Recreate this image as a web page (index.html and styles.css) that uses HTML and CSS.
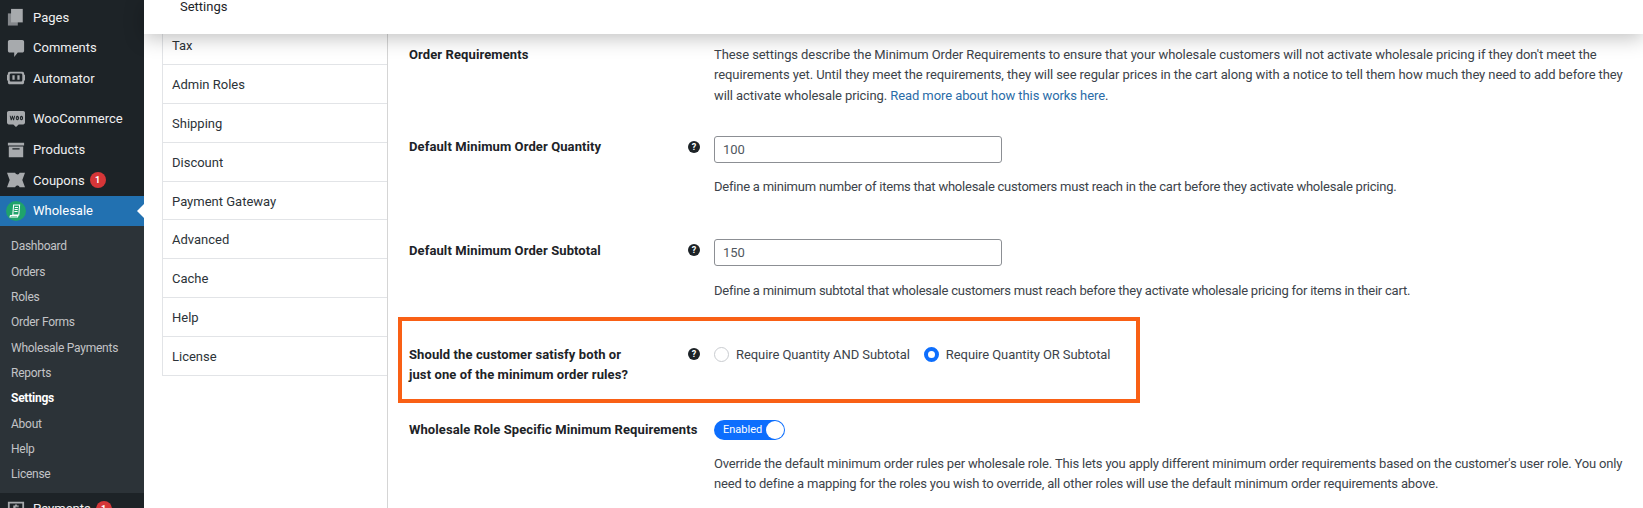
FILE: index.html
```html
<!DOCTYPE html>
<html lang="en">
<head>
<meta charset="utf-8">
<title>Settings</title>
<link rel="stylesheet" href="styles.css">
</head>
<body>
<div class="page">
  <nav class="sidebar">
    <ul class="menu">
      <li class="item"><svg class="ico" viewBox="0 0 20 20"><path opacity=".75" d="M1 6h11v13.500H1z"/><path d="M4.500 1H17.500v15H4.500z"/></svg>Pages</li>
      <li class="item"><svg class="ico" viewBox="0 0 20 20"><path d="M3 1h14c1.100 0 2 .9 2 2v10c0 1.100-.9 2-2 2h-5l-4 5v-5H3c-1.100 0-2-.9-2-2V3c0-1.100.9-2 2-2z"/></svg>Comments</li>
      <li class="item"><svg class="ico" viewBox="0 0 20 16"><path fill-rule="evenodd" d="M3 1h14c1.200 0 2 .8 2 2v1c.6 0 1 .4 1 1v5c0 .6-.4 1-1 1v2c0 1.200-.8 2-2 2H3c-1.200 0-2-.8-2-2v-2c-.6 0-1-.4-1-1V5c0-.6.4-1 1-1V3c0-1.200.8-2 2-2zm1.500 2C3.700 3 3 3.700 3 4.500v6C3 11.300 3.700 12 4.500 12h11c.8 0 1.500-.7 1.500-1.500v-6C17 3.700 16.300 3 15.500 3h-11zM6 5h2.500v5H6V5zm5.500 0H14v5h-2.500V5z"/></svg>Automator</li>
      <li class="item sep"><svg class="ico" viewBox="0 0 20 20"><path fill-rule="evenodd" d="M2 1h16c1.100 0 2 .9 2 2v11c0 1.100-.9 2-2 2h-5l-3 3-3-3H2c-1.100 0-2-.9-2-2V3c0-1.100.9-2 2-2zm1 5.500l1.200 5h1L6 8.500l.8 3h1l1.200-5H8l-.7 3-.8-3h-1l-.8 3-.7-3H3zm8.500 0a1.800 2.500 0 1 0 .1 0zm0 1.500a.6 1 0 1 1-.1 0zm4.500-1.500a1.800 2.500 0 1 0 .1 0zm0 1.500a.6 1 0 1 1-.1 0z"/></svg>WooCommerce</li>
      <li class="item"><svg class="ico" viewBox="0 0 20 16"><path fill-rule="evenodd" d="M1 0h18v3H1V0zm1 4h16v12H2V4zm4 2v1.500h8V6H6z"/></svg>Products</li>
      <li class="item"><svg class="ico" viewBox="0 0 20 16"><path d="M0 0h9c.6 1.200 1.500 1.800 3 1.800 1 0 1.500-.8 2-1.800h6l-3 8 3 8h-6c-.5-1-1-1.800-2-1.800-1.500 0-2.400.6-3 1.800H0l3-8-3-8z"/></svg>Coupons<span class="badge">1</span></li>
      <li class="item current"><span class="logo"><svg viewBox="0 0 20 20"><path fill="none" stroke="#fff" stroke-width="1.300" d="M7 2.500h7.500l-1 12.500H6zM8.500 5.500h4M8.200 8h4M8 10.500h4M3 15.500h9.500l-.5 2H2.500z"/></svg></span>Wholesale</li>
    </ul>
    <ul class="submenu">
      <li>Dashboard</li>
      <li>Orders</li>
      <li>Roles</li>
      <li>Order Forms</li>
      <li>Wholesale Payments</li>
      <li>Reports</li>
      <li class="on">Settings</li>
      <li>About</li>
      <li>Help</li>
      <li>License</li>
    </ul>
    <ul class="menu">
      <li class="item"><svg class="ico" viewBox="0 0 20 20"><path fill-rule="evenodd" d="M1 2h18v14H1V2zm2 2v10h14V4H3zm6 1h2v1h2v1.500h-3.500v1H13V13h-2v1H9v-1H7v-1.500h3.500v-1H7V6h2V5z"/></svg>Payments<span class="badge">1</span></li>
    </ul>
  </nav>

  <div class="main">
    <header class="topbar">Settings</header>
    <div class="body">
      <ul class="tabs">
        <li>Tax</li>
        <li>Admin Roles</li>
        <li>Shipping</li>
        <li>Discount</li>
        <li>Payment Gateway</li>
        <li>Advanced</li>
        <li>Cache</li>
        <li>Help</li>
        <li>License</li>
      </ul>
      <section class="settings">
        <div class="row r-intro">
          <h3 class="label">Order Requirements</h3>
          <span></span>
          <p class="desc intro">These settings describe the Minimum Order Requirements to ensure that your wholesale customers will not activate wholesale pricing if they don't meet the requirements yet. Until they meet the requirements, they will see regular prices in the cart along with a notice to tell them how much they need to add before they will activate wholesale pricing. <a href="#">Read more about how this works here</a>.</p>
        </div>
        <div class="row r-qty">
          <h3 class="label">Default Minimum Order Quantity</h3>
          <span class="help">?</span>
          <div class="control">
            <input class="field" type="text" value="100">
            <p class="desc note">Define a minimum number of items that wholesale customers must reach in the cart before they activate wholesale pricing.</p>
          </div>
        </div>
        <div class="row r-sub">
          <h3 class="label">Default Minimum Order Subtotal</h3>
          <span class="help">?</span>
          <div class="control">
            <input class="field" type="text" value="150">
            <p class="desc note">Define a minimum subtotal that wholesale customers must reach before they activate wholesale pricing for items in their cart.</p>
          </div>
        </div>
        <div class="row highlight">
          <h3 class="label">Should the customer satisfy both or<br>just one of the minimum order rules?</h3>
          <span class="help">?</span>
          <div class="radios">
            <span class="radio"><i class="dot"></i>Require Quantity AND Subtotal</span>
            <span class="radio"><i class="dot checked"></i>Require Quantity OR Subtotal</span>
          </div>
        </div>
        <div class="row r-role">
          <h3 class="label nowrap">Wholesale Role Specific Minimum Requirements</h3>
          <span></span>
          <div class="control">
            <span class="toggle">Enabled<i class="knob"></i></span>
            <p class="desc note2">Override the default minimum order rules per wholesale role. This lets you apply different minimum order requirements based on the customer's user role. You only need to define a mapping for the roles you wish to override, all other roles will use the default minimum order requirements above.</p>
          </div>
        </div>
      </section>
    </div>
  </div>
</div>
</body>
</html>
```

FILE: styles.css
```css
* { box-sizing: border-box; }
html, body { margin: 0; height: 100%; overflow: hidden; background: #fff; }
body { font-family: Roboto, "Open Sans", sans-serif; font-size: 13px; color: #2c3338; }
ul { list-style: none; margin: 0; padding: 0; }
h3, p { margin: 0; }
.page { display: flex; width: 1643px; height: 508px; overflow: hidden; }

.sidebar { width: 144px; flex: none; background: #1d2327; padding-top: 1.700px; color: #f0f0f1; }
.item { position: relative; display: flex; align-items: center; height: 30.67px; padding-left: 7px; }
.item.sep { margin-top: 10px; }
.ico { width: 18px; height: 18px; margin-right: 8px; fill: #a7aaad; flex: none; }
.badge { display: inline-flex; align-items: center; justify-content: center; width: 16px; height: 16px; margin-left: 5px; border-radius: 50%; background: #d63638; color: #fff; font-size: 9px; font-weight: 700; }
.current { background: #2271b1; color: #fff; padding-left: 6px; }
.current::after { content: ""; position: absolute; right: 0; top: 8px; border: 7px solid transparent; border-right-color: #fff; border-left-width: 0; }
.logo { display: flex; align-items: center; justify-content: center; width: 20px; height: 20px; margin-right: 7px; border-radius: 50%; background: #1fa36b; }
.logo svg { width: 16px; height: 16px; }
.submenu { background: #2c3338; height: 267px; padding: 8px 0 5px; font-size: 12px; letter-spacing: -.25px; color: #c3c4c7; }
.submenu li { height: 25.33px; line-height: 25px; padding-left: 11px; }
.submenu .on { color: #fff; font-weight: 700; }

.main { flex: 1; min-width: 0; display: flex; flex-direction: column; }
.topbar { position: relative; z-index: 2; height: 34px; flex: none; padding: 0 0 0 36px; line-height: 14px; background: #fff; color: #1d2327; box-shadow: 0 4px 20px rgba(0, 0, 0, .25); }
.body { display: flex; flex: 1; min-height: 0; }
.tabs { width: 225px; margin: -9px 0 0 18px; flex: none; align-self: flex-start; border: 1px solid #e2e4e7; border-right: 0; color: #2c3338; }
.tabs li { height: 38.9px; line-height: 39px; padding-left: 9px; border-bottom: 1px solid #e2e4e7; }
.tabs li:last-child { border-bottom: 0; height: 38px; }

.settings { flex: 1; min-width: 0; border-left: 1px solid #d5d5d5; padding-left: 21px; color: #3c434a; }
.row { display: grid; grid-template-columns: 279px 26px 1fr; }
.label { font-size: 13px; font-weight: 700; line-height: 20px; letter-spacing: .1px; color: #1d2327; }
.nowrap { white-space: nowrap; }
.desc { font-size: 13px; line-height: 20.3px; max-width: 925px; }
.desc a { color: #2a6ca8; text-decoration: none; }
.intro { letter-spacing: -.08px; }
.r-intro { padding-top: 11px; }
.r-qty { margin-top: 30px; }
.r-sub { margin-top: 41.500px; }
.r-qty .label { margin-top: 1px; }
.r-sub .label { margin-top: 2px; }
.help { display: inline-flex; align-items: center; justify-content: center; width: 12px; height: 12px; margin-top: 5px; border-radius: 50%; background: #1d2327; color: #fff; font-size: 9px; font-weight: 700; }
.field { display: block; width: 288px; height: 27px; padding: 0 8px; border: 1px solid #8c8f94; border-radius: 3px; font: 13px Roboto, "Open Sans", sans-serif; color: #50575e; }
.note { margin-top: 14px; letter-spacing: -.23px; }
.r-sub .note { margin-top: 15px; }
.highlight { width: 742px; height: 86px; margin: 16px 0 0 -11px; padding: 24px 0 0 7px; border: 4px solid #f96015; }
.highlight .help { margin-top: 3px; }
.radios { display: flex; gap: 14px; height: 20px; align-items: center; letter-spacing: -.08px; }
.radio { display: inline-flex; align-items: center; white-space: nowrap; }
.dot { width: 15px; height: 15px; margin-right: 7px; border: 1px solid #c9ccd0; border-radius: 50%; background: #fff; }
.dot.checked { border: 4.500px solid #0d6efd; }
.r-role { margin-top: 17px; }
.toggle { position: relative; display: flex; align-items: center; width: 71px; height: 20px; padding-left: 9px; border-radius: 10px; background: #0d6efd; color: #fff; font-size: 11px; }
.knob { position: absolute; right: 1px; top: 1px; width: 18px; height: 18px; border-radius: 50%; background: #fff; }
.note2 { margin-top: 14px; letter-spacing: -.17px; }
```
